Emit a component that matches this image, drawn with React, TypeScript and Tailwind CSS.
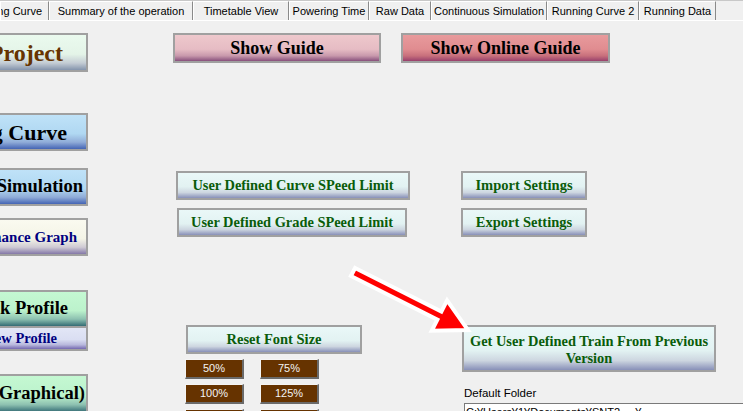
import React from "react";

const serif = { fontFamily: '"Liberation Serif", "Times New Roman", serif' };
const sans = { fontFamily: '"Liberation Sans", Arial, sans-serif' };

const tabs = [
  { label: "Running Curve", w: "w-[49px]", clip: true },
  { label: "Summary of the operation", w: "w-[144px]" },
  { label: "Timetable View", w: "w-[96px]" },
  { label: "Powering Time", w: "w-[80px]" },
  { label: "Raw Data", w: "w-[62px]" },
  { label: "Continuous Simulation", w: "w-[116px]" },
  { label: "Running Curve 2", w: "w-[92px]" },
  { label: "Running Data", w: "w-[77px]" },
];

const cyan = "bg-[linear-gradient(to_bottom,#eaf8f8_0%,#e2f2f2_55%,#cdd6e0_78%,#8890b8_100%)]";

function SideButton({ text, className, pr, h, color, size, extra = "" }: { text: string; className: string; pr: string; h: string; color: string; size: string; extra?: string }) {
  return (
    <div
      className={`flex items-center justify-end overflow-hidden whitespace-nowrap w-[88px] border-y-2 border-r-2 border-[#a0a0a0] font-bold ${h} ${pr} ${color} ${size} ${className} ${extra}`}
      style={serif}
    >
      <span>{text}</span>
    </div>
  );
}

function FormButton({ children, className }: { children: React.ReactNode; className: string }) {
  return (
    <div
      className={`flex items-center justify-center text-center border-2 border-[#a0a0a0] font-bold ${className}`}
      style={serif}
    >
      {children}
    </div>
  );
}

function Percent({ label }: { label: string }) {
  return (
    <div
      className="flex items-center justify-center w-[59px] h-[20px] bg-[#663300] text-[#f4f4f4] text-[11px] border-t border-l border-[#f4f4f4] border-r-2 border-b-2 border-r-[#6a6a6a] border-b-[#6a6a6a]"
      style={sans}
    >
      {label}
    </div>
  );
}

export default function App() {
  return (
    <div className="relative w-[743px] h-[411px] overflow-hidden bg-[#f0f0f0]" style={sans}>
      {/* tab strip */}
      <div className="h-[21px] border-t border-[#c8c8c8] border-b border-b-white flex items-end">
        {tabs.map((t) => (
          <div
            key={t.label}
            className={`h-[19px] flex items-center ${t.clip ? "justify-end pr-[6px] overflow-hidden" : "justify-center"} whitespace-nowrap text-[11px] text-black border-t border-l border-t-white border-l-white border-r border-r-[#8a8a8a] ${t.w}`}
          >
            {t.label}
          </div>
        ))}
      </div>

      <div className="flex">
        {/* left column */}
        <div className="flex flex-col w-[88px]">
          <SideButton text="Project" className="mt-[12px] bg-[linear-gradient(to_bottom,#eafaee_0%,#e4f4e8_55%,#c4ccd4_80%,#8494ac_100%)]" h="h-[39px]" pr="pr-[23px]" color="text-[#663300]" size="text-[24px]" />
          <SideButton text="Running Curve" className="mt-[41px] bg-[linear-gradient(to_bottom,#bfe2f8_0%,#b0d8f2_55%,#90acd8_80%,#4464b4_100%)]" h="h-[38px]" pr="pr-[19px]" color="text-black" size="text-[22px]" />
          <SideButton text="Continuous Simulation" className="mt-[17px] bg-[linear-gradient(to_bottom,#bfe2f8_0%,#b0d8f2_55%,#90acd8_80%,#4464b4_100%)]" h="h-[38px]" pr="pr-[3px]" color="text-black" size="text-[18.5px]" />
          <SideButton text="Performance Graph" className="mt-[12px] bg-[linear-gradient(to_bottom,#fafaf0_0%,#f4f4e6_55%,#cfcad4_80%,#8478a8_100%)]" h="h-[38px]" pr="pr-[9px]" color="text-[#000080]" size="text-[15px]" />
          <SideButton text="Track Profile" className="mt-[34px] bg-[linear-gradient(to_bottom,#c4f8d2_0%,#bcf2cc_55%,#8cc0b0_80%,#346c74_100%)]" h="h-[38px]" pr="pr-[18px]" color="text-black" size="text-[18.5px]" />
          <SideButton text="View Profile" className="bg-[linear-gradient(to_bottom,#e2e6f6_0%,#dadef2_55%,#b8b8dc_80%,#7468b0_100%)]" h="h-[23px]" pr="pr-[29px]" color="text-[#000080]" size="text-[14.5px]" extra="border-t-0" />
          <SideButton text="(Graphical)" className="mt-[23px] bg-[linear-gradient(to_bottom,#c4f8d2_0%,#bcf2cc_55%,#8cc0b0_80%,#346c74_100%)]" h="h-[40px]" pr="pr-[1px]" color="text-black" size="text-[18.5px]" />
        </div>

        {/* form area */}
        <div className="flex flex-col">
          <div className="flex mt-[12px] ml-[85px] gap-[20px]">
            <FormButton className="w-[208px] h-[30px] text-[18px] text-black bg-[linear-gradient(to_bottom,#eec8cc_0%,#e6bcc4_55%,#c898ac_80%,#88507c_100%)]">Show Guide</FormButton>
            <FormButton className="w-[209px] h-[30px] text-[18px] text-black bg-[linear-gradient(to_bottom,#e89a9c_0%,#e08c90_55%,#c8707c_80%,#98406c_100%)]">Show Online Guide</FormButton>
          </div>

          <div className="flex mt-[108px] ml-[88px]">
            <FormButton className={`w-[234px] h-[29px] text-[14.4px] text-[#0a5c0a] ${cyan}`}>User Defined Curve SPeed Limit</FormButton>
            <FormButton className={`ml-[51px] w-[126px] h-[29px] text-[14.5px] text-[#0a5c0a] ${cyan}`}>Import Settings</FormButton>
          </div>

          <div className="flex mt-[8px] ml-[89px]">
            <FormButton className={`w-[230px] h-[29px] text-[14.4px] text-[#0a5c0a] ${cyan}`}>User Defined Grade SPeed Limit</FormButton>
            <FormButton className={`ml-[54px] w-[126px] h-[29px] text-[14.5px] text-[#0a5c0a] ${cyan}`}>Export Settings</FormButton>
          </div>

          <div className="flex mt-[88px] ml-[97px]">
            <div className="flex flex-col w-[177px]">
              <FormButton className={`ml-[1px] w-[176px] h-[29px] text-[14.5px] text-[#0a5c0a] ${cyan}`}>Reset Font Size</FormButton>
              <div className="grid grid-cols-[59px_59px] gap-x-[16px] gap-y-[5px] mt-[5px]">
                <Percent label="50%" />
                <Percent label="75%" />
                <Percent label="100%" />
                <Percent label="125%" />
                <Percent label="150%" />
                <Percent label="200%" />
              </div>
            </div>
            <div className="flex flex-col ml-[100px]">
              <FormButton className={`w-[254px] h-[47px] text-[14.4px] leading-[17px] text-[#0a5c0a] pt-[2px] ${cyan}`}>
                Get User Defined Train From Previous
                <br />
                Version
              </FormButton>
              <div className="mt-[14px] ml-[2px] text-[11.5px] leading-[14px] text-black">Default Folder</div>
              <div className="mt-[3px] ml-[2px] w-[300px] h-[20px] bg-white border border-[#7a7a7a] text-[11px] leading-[16px] pl-[1px] text-black whitespace-nowrap">
                C:¥Users¥1¥Documents¥SNT2 ... ¥
              </div>
            </div>
          </div>
        </div>
      </div>

      {/* pointer arrow overlay */}
      <svg className="absolute left-0 top-0 pointer-events-none" width="743" height="411">
        <polygon
          points="355.1,268 441.4,311.6 447.1,300.4 468,330 431.7,330.8 437.4,319.6 350.9,276"
          fill="#ff0000"
          stroke="#ffffff"
          strokeWidth="4"
          strokeLinejoin="miter"
        />
      </svg>
    </div>
  );
}
